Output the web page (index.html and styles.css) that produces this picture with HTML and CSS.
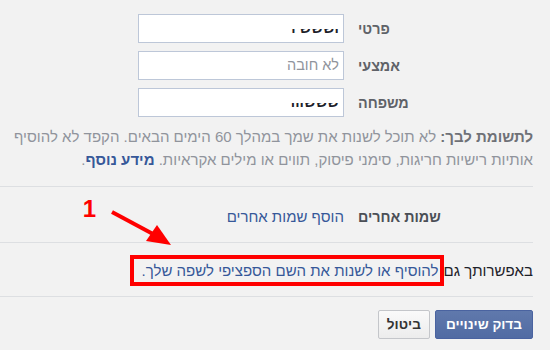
FILE: index.html
```html
<!DOCTYPE html>
<html lang="he" dir="rtl">
<head>
<meta charset="utf-8">
<title>שם</title>
<link rel="stylesheet" href="styles.css">
</head>
<body>
<div class="page">
  <section class="names">
    <div class="grid">
      <span class="lbl">פרטי</span>
      <div class="field"><span class="masked">וששש ו</span></div>
      <span class="lbl">אמצעי</span>
      <div class="field placeholder">לא חובה</div>
      <span class="lbl">משפחה</span>
      <div class="field"><span class="masked">שששווו</span></div>
    </div>
    <p class="note"><b>לתשומת לבך:</b> לא תוכל לשנות את שמך במהלך 60 הימים הבאים. הקפד לא להוסיף אותיות רישיות חריגות, סימני פיסוק, תווים או מילים אקראיות. <a class="more">מידע נוסף</a>.</p>
  </section>
  <section class="other">
    <div class="grid">
      <span class="lbl dark">שמות אחרים</span>
      <a class="link">הוסף שמות אחרים</a>
    </div>
  </section>
  <section class="lang">
    <span class="plain">באפשרותך גם</span>
    <a class="link boxed">להוסיף או לשנות את השם הספציפי לשפה שלך.</a>
  </section>
  <div class="actions">
    <button class="btn primary">בדוק שינויים</button>
    <button class="btn cancel">ביטול</button>
  </div>
</div>
<svg class="annot" width="550" height="350" viewBox="0 0 550 350" aria-hidden="true">
  <text x="96" y="217" class="num">1</text>
  <line x1="112" y1="212" x2="153" y2="234" stroke="#f00" stroke-width="4"/>
  <polygon points="146,241 157,225 171,245" fill="#f00"/>
</svg>
</body>
</html>
```

FILE: styles.css
```css
html, body {
  margin: 0;
  padding: 0;
  background: #f2f2f2;
}
body {
  font-family: "Liberation Sans", Arial, sans-serif;
  font-size: 15px;
  color: #1d2129;
  position: relative;
  width: 550px;
  height: 350px;
  overflow: hidden;
}
.page {
  margin-right: 17px;
}
.grid {
  display: grid;
  grid-template-columns: 175px 206px;
  column-gap: 14px;
  row-gap: 8px;
}
.names {
  padding: 14px 0 15px;
  border-bottom: 1px solid #dddfe2;
}
.lbl {
  align-self: center;
  text-align: left;
  font-weight: bold;
  color: #5f6268;
  font-size: 14.3px;
}
.lbl.dark {
  color: #4b4f56;
}
.field {
  box-sizing: border-box;
  height: 29px;
  border: 1px solid #bdc7d8;
  background: #fff;
  padding: 0 4px;
  line-height: 27px;
  font-size: 14.5px;
  color: #1d2129;
}
.field.placeholder {
  color: #90949c;
}
.masked {
  display: inline-block;
  clip-path: inset(52% 0 0 0);
  font-weight: bold;
}
.note {
  margin: 8px 0 0;
  font-size: 15px;
  line-height: 23px;
  color: #90949c;
}
.note b {
  color: #6f7177;
}
.more {
  color: #365899;
  font-weight: bold;
}
.other {
  padding: 20px 0 15px;
  line-height: 20px;
  border-bottom: 1px solid #dddfe2;
}
.link {
  color: #365899;
}
.lang {
  display: flex;
  align-items: center;
  padding: 12px 0 10px;
  border-bottom: 1px solid #dddfe2;
  line-height: 23px;
}
.plain {
  color: #1d2129;
}
.boxed {
  border: 4px solid #f00;
  padding: 0 1px 0 8px;
}
.actions {
  display: flex;
  gap: 5px;
  padding-top: 13px;
}
.btn {
  box-sizing: border-box;
  height: 29px;
  font-family: "Liberation Sans", Arial, sans-serif;
  font-size: 13.6px;
  font-weight: bold;
  padding: 0 10px;
  border-radius: 2px;
}
.primary {
  background: linear-gradient(#6079ac, #516ba3);
  border: 1px solid #4a63a0;
  color: #fff;
}
.cancel {
  background: linear-gradient(#fafafa, #ececec);
  border: 1px solid #c4c6ca;
  color: #333;
  padding: 0 8px;
}
.annot {
  position: absolute;
  top: 0;
  left: 0;
  pointer-events: none;
}
.num {
  font-family: "Liberation Sans", Arial, sans-serif;
  font-size: 24px;
  font-weight: bold;
  fill: #f00;
}
```
